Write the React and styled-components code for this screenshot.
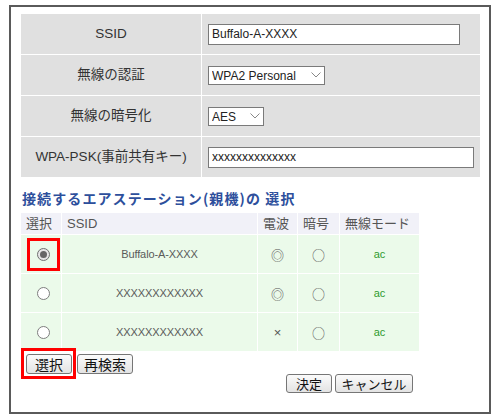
import React from 'react';
import styled, { createGlobalStyle } from 'styled-components';

const Global = createGlobalStyle`
  html, body { margin: 0; padding: 0; background: #fff; }
  body { font-family: "Liberation Sans", "Noto Sans CJK JP", sans-serif; }
`;

const Frame = styled.div`
  box-sizing: border-box;
  width: 482px;
  height: 409px;
  margin: 5px 0 0 9px;
  border: 2px solid #5a5a5a;
  padding: 7px 9px 0 10px;
  background: #fff;
`;

const SettingsGrid = styled.div`
  display: grid;
  grid-template-columns: 180px 1fr;
  column-gap: 1px;
  row-gap: 1px;
`;

const LabelCell = styled.div`
  background: #e0e0e0;
  height: 40px;
  display: flex;
  align-items: center;
  justify-content: center;
  font-size: 13.5px;
  line-height: 16px;
  color: #333;
  font-family: "Liberation Sans", "Noto Sans CJK JP", sans-serif;
`;

const ValueCell = styled.div`
  background: #e0e0e0;
  height: 40px;
  display: flex;
  align-items: center;
  padding-left: 6px;
`;

const TextInput = styled.input`
  box-sizing: border-box;
  width: ${(p) => p.$w}px;
  height: 21px;
  border: 1px solid #7a7a7a;
  padding: 0 3px;
  margin: 0;
  font-family: "Liberation Sans", sans-serif;
  font-size: 12px;
  color: #222;
  background: #fff;
  outline: none;
`;

const SelectWrap = styled.span`
  position: relative;
  display: inline-block;
  width: ${(p) => p.$w}px;
  height: 19px;
`;

const Select = styled.select`
  appearance: none;
  -webkit-appearance: none;
  box-sizing: border-box;
  width: 100%;
  height: 100%;
  margin: 0;
  border: 1px solid #7a7a7a;
  border-radius: 0;
  background: #fff;
  padding: 0 0 0 3px;
  font-family: "Liberation Sans", sans-serif;
  font-size: 12px;
  color: #222;
  outline: none;
`;

const Chevron = styled.svg`
  position: absolute;
  right: 4px;
  top: 6px;
  pointer-events: none;
`;

const Heading = styled.h2`
  margin: 11px 0 5px 1px;
  font-size: 14px;
  line-height: 20px;
  font-weight: bold;
  color: #2d4f9c;
  letter-spacing: 1.1px;
  font-family: "Noto Sans CJK JP", sans-serif;
`;

const StationGrid = styled.div`
  display: grid;
  grid-template-columns: 40px 195px 39px 41px 79px;
  gap: 1px;
  width: 398px;
`;

const HeadCell = styled.div`
  background: #f1f1f8;
  height: 21px;
  display: flex;
  align-items: center;
  padding-left: 5px;
  font-size: 13px;
  line-height: 16px;
  color: #555;
  font-family: "Liberation Sans", "Noto Sans CJK JP", sans-serif;
  white-space: nowrap;
`;

const DataCell = styled.div`
  background: #ebfaea;
  height: 38px;
  display: flex;
  align-items: center;
  justify-content: ${(p) => (p.$start ? 'flex-start' : 'center')};
  padding-left: ${(p) => (p.$start ? '6px' : '0')};
  font-size: 11px;
  color: #666;
`;

const SsidText = styled.span`
  font-family: "Liberation Sans", sans-serif;
  font-size: 11px;
  color: #5a5a5a;
  letter-spacing: -0.1px;
`;

const Symbol = styled.span`
  font-family: ${(p) => (p.$latin ? '"Liberation Sans"' : '"Noto Sans CJK JP"')}, sans-serif;
  font-size: 13px;
  color: #555;
  line-height: 1;
`;

const ModeText = styled.span`
  font-family: "Liberation Sans", sans-serif;
  font-size: 11px;
  color: #2e9b2e;
`;

const RadioFrame = styled.span`
  box-sizing: border-box;
  width: 33px;
  height: 33px;
  border: 3px solid ${(p) => (p.$marked ? '#ff0000' : 'transparent')};
  display: flex;
  align-items: center;
  justify-content: center;
`;

const Radio = styled.input.attrs({ type: 'radio' })`
  appearance: none;
  -webkit-appearance: none;
  margin: 0;
  width: 13px;
  height: 13px;
  border-radius: 50%;
  border: 1px solid #7e7e7e;
  background: #fff;
  box-sizing: border-box;
  display: grid;
  place-content: center;
  &:checked {
    border-color: #707070;
    background: #e6e6e6;
  }
  &:checked::before {
    content: '';
    width: 7px;
    height: 7px;
    border-radius: 50%;
    background: #666;
  }
`;

const ActionRow = styled.div`
  display: flex;
  align-items: flex-start;
  gap: 1px;
  margin-top: -3px;
  position: relative;
`;

const RedBox = styled.span`
  display: flex;
  border: 3px solid #ff0000;
  padding: 3px 1px 2px 2px;
`;

const SubmitRow = styled.div`
  display: flex;
  justify-content: flex-end;
  gap: 3px;
  width: 398px;
  box-sizing: border-box;
  padding-right: 6px;
  margin-top: -5px;
`;

const Button = styled.button`
  box-sizing: border-box;
  width: ${(p) => p.$w}px;
  height: ${(p) => p.$h}px;
  margin: 0;
  padding: 0;
  border: 1px solid #767676;
  border-radius: 3px;
  background: linear-gradient(#fbfbfb, #e3e3e3);
  font-family: "Noto Sans CJK JP", sans-serif;
  font-size: ${(p) => p.$fs}px;
  line-height: 1;
  color: #111;
  display: flex;
  align-items: center;
  justify-content: center;
`;

const ShiftedButton = styled(Button)`
  margin-top: 6px;
`;

const stations = [
  { ssid: 'Buffalo-A-XXXX', wave: '◎', waveLatin: false, enc: '○', mode: 'ac', checked: true },
  { ssid: 'XXXXXXXXXXXX', wave: '◎', waveLatin: false, enc: '○', mode: 'ac', checked: false },
  { ssid: 'XXXXXXXXXXXX', wave: '×', waveLatin: true, enc: '○', mode: 'ac', checked: false },
];

function ChevronIcon() {
  return (
    <Chevron width="10" height="6" viewBox="0 0 10 6">
      <polyline points="0.5,0.5 5,5 9.5,0.5" fill="none" stroke="#888" strokeWidth="1" />
    </Chevron>
  );
}

export default function App() {
  return (
    <>
      <Global />
      <Frame>
        <SettingsGrid>
          <LabelCell>SSID</LabelCell>
          <ValueCell>
            <TextInput $w={252} defaultValue="Buffalo-A-XXXX" />
          </ValueCell>
          <LabelCell>無線の認証</LabelCell>
          <ValueCell>
            <SelectWrap $w={117}>
              <Select defaultValue="wpa2">
                <option value="wpa2">WPA2 Personal</option>
              </Select>
              <ChevronIcon />
            </SelectWrap>
          </ValueCell>
          <LabelCell>無線の暗号化</LabelCell>
          <ValueCell>
            <SelectWrap $w={56}>
              <Select defaultValue="aes">
                <option value="aes">AES</option>
              </Select>
              <ChevronIcon />
            </SelectWrap>
          </ValueCell>
          <LabelCell>WPA-PSK(事前共有キー)</LabelCell>
          <ValueCell>
            <TextInput $w={266} defaultValue="xxxxxxxxxxxxxx" />
          </ValueCell>
        </SettingsGrid>

        <Heading>接続するエアステーション(親機)の 選択</Heading>

        <StationGrid>
          <HeadCell>選択</HeadCell>
          <HeadCell>SSID</HeadCell>
          <HeadCell>電波</HeadCell>
          <HeadCell>暗号</HeadCell>
          <HeadCell>無線モード</HeadCell>
          {stations.map((s, i) => (
            <React.Fragment key={i}>
              <DataCell $start>
                <RadioFrame $marked={s.checked}>
                  <Radio name="station" defaultChecked={s.checked} />
                </RadioFrame>
              </DataCell>
              <DataCell>
                <SsidText>{s.ssid}</SsidText>
              </DataCell>
              <DataCell>
                <Symbol $latin={s.waveLatin}>{s.wave}</Symbol>
              </DataCell>
              <DataCell>
                <Symbol>{s.enc}</Symbol>
              </DataCell>
              <DataCell>
                <ModeText>{s.mode}</ModeText>
              </DataCell>
            </React.Fragment>
          ))}
        </StationGrid>

        <ActionRow>
          <RedBox>
            <Button $w={46} $h={20} $fs={14}>選択</Button>
          </RedBox>
          <ShiftedButton $w={56} $h={20} $fs={14}>再検索</ShiftedButton>
        </ActionRow>

        <SubmitRow>
          <Button $w={46} $h={19} $fs={13}>決定</Button>
          <Button $w={78} $h={19} $fs={13}>キャンセル</Button>
        </SubmitRow>
      </Frame>
    </>
  );
}
